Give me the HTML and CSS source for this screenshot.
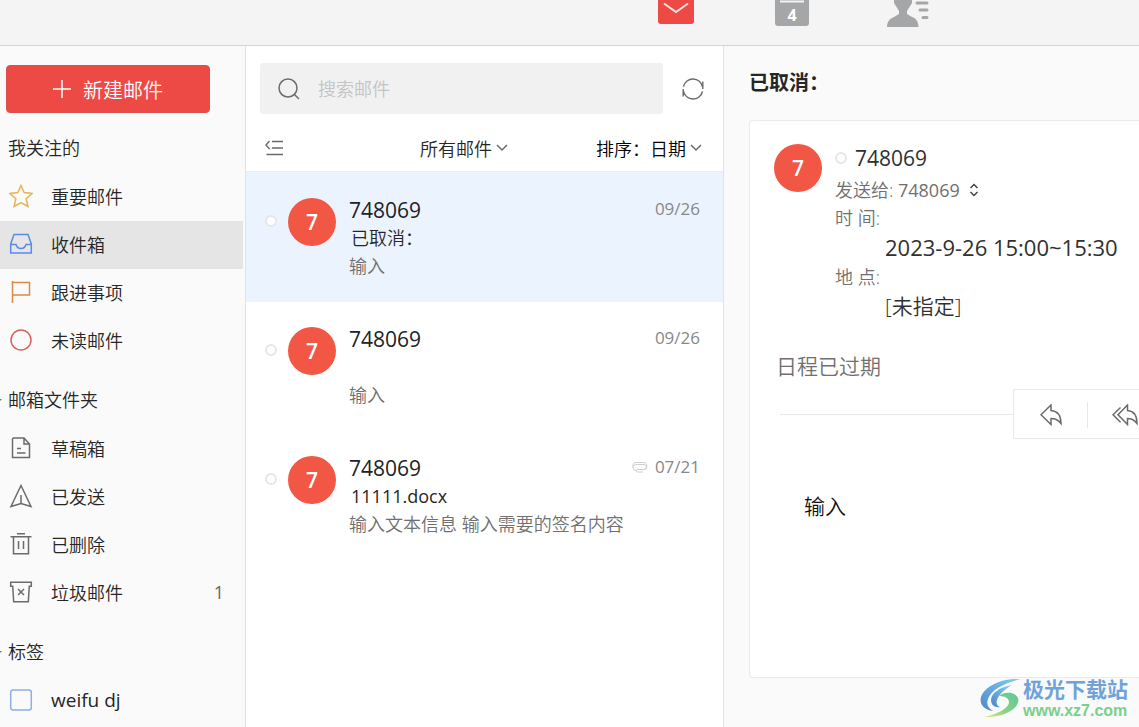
FILE: index.html
```html
<!DOCTYPE html>
<html lang="zh-CN">
<head>
<meta charset="utf-8">
<meta name="viewport" content="width=device-width, initial-scale=1">
<title>收件箱</title>
<link rel="stylesheet" href="styles.css">
</head>
<body>
<header class="topbar">
  <button class="tab" type="button" aria-label="邮件">
    <svg width="36" height="36" viewBox="0 0 36 36"><rect width="36" height="36" rx="3" fill="#ee4a45"/><path d="M6 15.500l12 8.500 12-8.500" fill="none" stroke="#fbe4e2" stroke-width="2"/></svg>
  </button>
  <button class="tab tab-calendar" type="button" aria-label="日历">
    <svg width="34" height="36" viewBox="0 0 34 36"><rect width="34" height="36" rx="3" fill="#a4a6a8"/><path d="M5 11.500h24" stroke="#f4f4f4" stroke-width="2"/></svg>
    <span class="tab-day">4</span>
  </button>
  <button class="tab" type="button" aria-label="联系人">
    <svg width="42" height="36" viewBox="0 0 42 36" fill="#a4a6a8"><path d="M7 4h18v8l-5 8v3l5 3c4 1 6.500 5 6.500 10H0c0-5 2.500-8.500 7-10l5-3v-3L7 12z"/><path d="M30 12h10M33 19h7M36 26.500h4" stroke="#a4a6a8" stroke-width="3" stroke-linecap="round"/></svg>
  </button>
</header>
<div class="app">
  <aside class="sidebar">
    <button class="compose" type="button">
      <svg width="18" height="18" viewBox="0 0 18 18"><path d="M9 0v18M0 9h18" stroke="#fff" stroke-width="1.500"/></svg>
      新建邮件
    </button>
    <nav>
      <h2 class="group">我关注的</h2>
      <a class="folder" href="#"><svg class="icon" viewBox="0 0 24 24" stroke="#e9b355"><path d="M12 1.500l3.200 7.100 8 .8-6 5.300 1.700 7.800-6.900-4-6.900 4 1.700-7.800-6-5.300 8-.8z"/></svg>重要邮件</a>
      <a class="folder selected" href="#"><svg class="icon" viewBox="0 0 24 24" stroke="#5c8ae6"><path d="M5 2.500h14l3.300 9.500v9H1.700v-9zM1.700 12.500H7c.7 2.500 2.500 4 5 4s4.300-1.500 5-4h5.300"/></svg>收件箱</a>
      <a class="folder" href="#"><svg class="icon" viewBox="0 0 24 24" stroke="#d98a45"><path d="M3.500 1v22M3.500 2.500h17v12.500h-17"/></svg>跟进事项</a>
      <a class="folder" href="#"><svg class="icon" viewBox="0 0 24 24" stroke="#d9625f"><circle cx="12" cy="12" r="10"/></svg>未读邮件</a>
      <h2 class="group foldable">邮箱文件夹</h2>
      <a class="folder" href="#"><svg class="icon" viewBox="0 0 24 24" stroke="#6b6b6b"><path d="M4.500 2h10.500l5.500 6v13.500h-17V3zM15 2v6h5.500M8 12.500h4M8 17h8.500"/></svg>草稿箱</a>
      <a class="folder" href="#"><svg class="icon" viewBox="0 0 24 24" stroke="#6b6b6b"><path d="M12 1.500L22 22.500l-10-3-10 3zM12 11v8.500"/></svg>已发送</a>
      <a class="folder" href="#"><svg class="icon" viewBox="0 0 24 24" stroke="#6b6b6b"><path d="M8 1.700h8M1.500 4.700h21M4.500 4.700v17h15v-17M9.500 9v8M14.500 9v8"/></svg>已删除</a>
      <a class="folder" href="#"><svg class="icon" viewBox="0 0 24 24" stroke="#6b6b6b"><path d="M1.700 2.200h20.600v4h-2l-1 15.500H4.700l-1-15.500h-2zM9 9l6 6M15 9l-6 6"/></svg>垃圾邮件<span class="count">1</span></a>
      <h2 class="group foldable">标签</h2>
      <a class="folder tag" href="#"><svg class="icon" viewBox="0 0 24 24" stroke="#8fb0e6"><rect x="1.700" y="2" width="20.600" height="20" rx="2.500"/></svg>weifu dj</a>
    </nav>
  </aside>
  <section class="list">
    <div class="search-row">
      <label class="search">
        <svg width="22" height="22" viewBox="0 0 22 22" fill="none" stroke="#6b6b6b" stroke-width="1.500"><circle cx="10" cy="10" r="9"/><path d="M16 16l5 5"/></svg>
        <input type="search" placeholder="搜索邮件" aria-label="搜索邮件">
      </label>
      <button class="plain" type="button" aria-label="刷新">
        <svg width="24" height="24" viewBox="0 0 24 24" fill="none" stroke="#6b6b6b" stroke-width="1.400"><path d="M2.500 9.500A9.700 9.700 0 0 1 21.500 10M21.800 4.500v7.500M21.500 14.500A9.700 9.700 0 0 1 2.500 14M2.200 19.500V12"/></svg>
      </button>
    </div>
    <div class="filters">
      <button class="plain" type="button" aria-label="收起">
        <svg width="18" height="16" viewBox="0 0 18 16" fill="none" stroke="#6b6b6b" stroke-width="1.400"><path d="M4.500 1L1 5l3.500 4M7 1.500h11M7 8h11M1.500 14.500H18"/></svg>
      </button>
      <button class="plain filter" type="button">所有邮件<svg width="12" height="8" viewBox="0 0 12 8"><path d="M1 1l5 5 5-5" fill="none" stroke="#6b6b6b" stroke-width="1.500"/></svg></button>
      <button class="plain filter sort" type="button">排序：日期<svg width="12" height="8" viewBox="0 0 12 8"><path d="M1 1l5 5 5-5" fill="none" stroke="#6b6b6b" stroke-width="1.500"/></svg></button>
    </div>
    <article class="mail active">
      <span class="dot"></span><span class="avatar">7</span>
      <div class="summary"><h3>748069</h3><p class="subject">已取消：</p><p class="snippet">输入</p></div>
      <time>09/26</time>
    </article>
    <article class="mail">
      <span class="dot"></span><span class="avatar">7</span>
      <div class="summary"><h3>748069</h3><p class="subject"></p><p class="snippet">输入</p></div>
      <time>09/26</time>
    </article>
    <article class="mail">
      <span class="dot"></span><span class="avatar">7</span>
      <div class="summary"><h3>748069</h3><p class="subject file">11111.docx</p><p class="snippet">输入文本信息 输入需要的签名内容</p></div>
      <svg class="clip" width="16" height="12" viewBox="0 0 16 12" fill="none" stroke="#cfcfcf"><path d="M5 8.500h7a2 2 0 0 0 0-5H4a3 3 0 0 0 0 6h1M4 9.500a2 2 0 0 0 2 1.500h5M12.500 8.500c3-.5 3.500-7-.5-7H4C.500 1.500.500 5 1.500 7"/></svg>
      <time>07/21</time>
    </article>
  </section>
  <main class="detail">
    <h1>已取消：</h1>
    <div class="card">
      <div class="head">
        <span class="avatar">7</span>
        <div class="info">
          <h2 class="sender"><span class="dot"></span>748069</h2>
          <button class="plain recipient" type="button"><span>发送给: <span class="number">748069</span></span><svg width="10" height="14" viewBox="0 0 10 14" fill="none" stroke="#444" stroke-width="1.500"><path d="M1.500 5L5 1.500 8.500 5M1.500 9L5 12.500 8.500 9"/></svg></button>
          <dl>
            <dt>时 间:</dt><dd class="when">2023-9-26 15:00~15:30</dd>
            <dt>地 点:</dt><dd>[未指定]</dd>
          </dl>
        </div>
      </div>
      <p class="expired">日程已过期</p>
      <div class="actions-row">
        <div class="actions">
          <button class="action" type="button" aria-label="回复"><svg width="22" height="22" viewBox="0 0 22 22"><path d="M11 1v5.500c6 .5 10 5 10 13-2.500-3.500-5.500-5-10-5V20.500L1 10.800z"/></svg></button>
          <button class="action" type="button" aria-label="回复全部"><svg width="26" height="22" viewBox="0 0 26 22"><path d="M15.500 1v5.500c6 .5 9.500 5 9.500 13-2.500-3.500-5-5-9.500-5V20.500L6 10.800zM8.500 3.500L1 10.800l7.500 7.500"/></svg></button>
        </div>
      </div>
      <p class="message">输入</p>
    </div>
  </main>
</div>
<div class="brand">
  <svg width="44" height="42" viewBox="0 0 44 42">
    <defs>
      <linearGradient id="blue" x1="1" y1="0" x2="0" y2="1"><stop offset="0" stop-color="#7fd0ea"/><stop offset="1" stop-color="#4f86cf"/></linearGradient>
      <linearGradient id="green" x1="1" y1="0" x2="0" y2="1"><stop offset="0" stop-color="#5cc79a"/><stop offset=".6" stop-color="#8fd284"/><stop offset="1" stop-color="#ece77c"/></linearGradient>
    </defs>
    <path d="M42 1C22 0 6 8 2 19c-2 7 3 13 12 14-5-3-7-7-5-12C12 12 25 5 42 1z" fill="url(#blue)"/>
    <path d="M33 7C21 9 12 15 12 22c0 5 4 8 9 7-3-1-4-4-3-7 2-6 8-11 15-15z" fill="url(#blue)"/>
    <path d="M20 18c6-5 16-4 19 2 3 9-12 20-34 19 14-3 25-9 25-15 0-4-5-6-10-6z" fill="url(#green)"/>
  </svg>
  <div class="brand-text"><strong>极光下载站</strong><span>www.xz7.com</span></div>
</div>
</body>
</html>
```
FILE: styles.css
```css
* { box-sizing: border-box; }

body {
  display: flex;
  flex-direction: column;
  height: 100vh;
  margin: 0;
  overflow: hidden;
  background: #fafafa;
  color: #262626;
  font-family: "Open Sans", "Noto Sans CJK SC", sans-serif;
  font-size: 18px;
  font-weight: 350;
}

h1, h2, h3, p, dl, dd { margin: 0; font-weight: inherit; }

button, input { color: inherit; font: inherit; }

svg { flex: none; }

.topbar {
  display: flex;
  flex: none;
  height: 46px;
  padding-left: 618px;
  border-bottom: 1px solid #d4d4d4;
  background: #f4f4f4;
  overflow: hidden;
}

.tab {
  display: flex;
  flex: none;
  align-items: flex-end;
  justify-content: center;
  width: 116px;
  height: 24px;
  padding: 0;
  border: 0;
  background: none;
}

.tab-calendar { position: relative; height: 26px; }
.tab:last-child { height: 27px; }

.tab-day {
  position: absolute;
  inset: auto 0 0;
  color: #fff;
  font-size: 16px;
  font-weight: 700;
  line-height: 22px;
  text-align: center;
}

.app { display: flex; flex: 1; min-height: 0; }

.sidebar {
  flex: none;
  width: 246px;
  padding-top: 19px;
  border-right: 1px solid #e2e2e2;
}

.compose {
  display: flex;
  align-items: center;
  justify-content: center;
  gap: 12px;
  width: 204px;
  height: 48px;
  margin-left: 6px;
  border: 1px solid #dc504b;
  border-radius: 4px;
  background: #ee4a45;
  color: #fff;
  font-size: 20px;
}

.group {
  position: relative;
  padding: 11px 8px 1px;
  font-size: 18px;
  line-height: 48px;
}

.foldable::before {
  position: absolute;
  top: 34px;
  left: -6px;
  border: 4px solid transparent;
  border-top-color: #777;
  content: "";
}

.folder {
  display: flex;
  align-items: center;
  gap: 18px;
  height: 48px;
  margin-right: 2px;
  padding: 0 19px 2px 9px;
  color: inherit;
  text-decoration: none;
}

.selected { background: #e5e5e5; }
.tag { font-size: 19px; font-weight: 400; }

.icon { width: 24px; height: 24px; fill: none; stroke-width: 1.5; }

.count { margin-left: auto; color: #666; font-weight: 400; }
.number { font-weight: 400; }

.list {
  flex: none;
  width: 478px;
  border-right: 1px solid #e2e2e2;
  background: #fff;
}

.search-row {
  display: flex;
  align-items: center;
  gap: 18px;
  padding: 17px 18px 0 14px;
}

.search {
  display: flex;
  flex: 1;
  align-items: center;
  gap: 18px;
  height: 51px;
  padding: 0 18px;
  border-radius: 3px;
  background: #f1f1f1;
}

.search input {
  flex: 1;
  min-width: 0;
  padding: 0;
  border: 0;
  outline: 0;
  background: none;
}

.search input::placeholder { color: #c4c4c4; }

.plain { display: flex; align-items: center; padding: 0; border: 0; background: none; }

.filters {
  display: grid;
  grid-template-columns: 155px auto 1fr;
  align-items: center;
  height: 58px;
  padding: 10px 21px 0 19px;
  border-bottom: 1px solid #e8edf2;
}

.filter { gap: 4px; }
.sort { justify-self: end; color: #000; }

.mail {
  display: flex;
  height: 129px;
  padding: 24px 23px 0 19px;
}

.active { height: 130px; margin-bottom: -1px; background: #ebf4fe; }

.dot {
  flex: none;
  width: 12px;
  height: 12px;
  border: 2px solid #e6e6e6;
  border-radius: 50%;
  background: #fff;
}

.mail .dot { margin: 19px 11px 0 0; }

.avatar {
  display: flex;
  flex: none;
  align-items: center;
  justify-content: center;
  width: 48px;
  height: 48px;
  border-radius: 50%;
  background: #f25745;
  color: #fff;
  font-size: 21px;
  font-weight: 600;
}

.mail .avatar { margin: 2px 13px 0 0; }

.summary { flex: 1; min-width: 0; line-height: 28px; }
.summary h3 { color: #222; font-size: 21px; font-weight: 400; line-height: 28px; }
.subject { height: 28px; padding-left: 2px; }
.file { font-weight: 400; }
.snippet { color: #707070; }

.mail time { color: #888; font-size: 17px; font-weight: 400; line-height: 26px; }
.clip { margin: 7px 7px 0 0; }

.detail {
  display: flex;
  flex: 1;
  flex-direction: column;
  min-width: 0;
  padding: 22px 0 49px 25px;
}

.detail h1 { font-size: 20px; font-weight: 700; line-height: 30px; }

.card {
  flex: 1;
  margin: 22px 0 0;
  padding: 23px 0 0 24px;
  border: 1px solid #ebebeb;
  border-right: 0;
  border-radius: 4px 0 0 4px;
  background: #fff;
}

.head { display: flex; gap: 13px; }
.info { color: #707070; line-height: 28px; }

.sender {
  display: flex;
  align-items: center;
  gap: 8px;
  margin-bottom: 4px;
  color: #303030;
  font-size: 21px;
  font-weight: 400;
}

.recipient { gap: 9px; }
.info dd { margin-left: 50px; color: #303030; font-size: 21px; line-height: 31px; white-space: nowrap; }
.info .when { font-size: 22px; font-weight: 400; }

.expired { margin: 29px 0 8px 2px; color: #707070; font-size: 21px; line-height: 30px; }

.actions-row { display: flex; align-items: center; }
.actions-row::before { flex: 1; margin-left: 6px; border-top: 1px solid #e8e8e8; content: ""; }

.actions {
  display: flex;
  width: 126px;
  height: 50px;
  border: 1px solid #e8e8e8;
  border-right: 0;
  border-radius: 2px 0 0 2px;
  overflow: hidden;
}

.action {
  display: flex;
  flex: none;
  align-items: center;
  justify-content: center;
  width: 74px;
  height: 26px;
  margin-top: 12px;
  padding: 0;
  border: 0;
  border-right: 1px solid #e8e8e8;
  background: none;
}

.action svg { fill: none; stroke: #6b6b6b; stroke-width: 1.5; }

.message { margin: 52px 0 0 30px; color: #111; font-size: 21px; line-height: 30px; }

.brand {
  position: absolute;
  right: 11px;
  bottom: 6px;
  display: flex;
  align-items: center;
}

.brand-text { display: flex; flex-direction: column; }
.brand strong { color: #6ea3da; font-size: 21px; font-weight: 700; line-height: 24px; }
.brand span { color: #78d08b; font-family: "Liberation Sans", sans-serif; font-size: 16px; font-weight: 700; line-height: 20px; }
```
